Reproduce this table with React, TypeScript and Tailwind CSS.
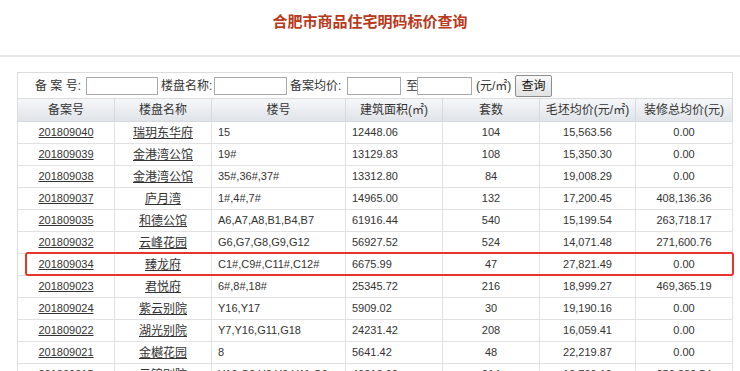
import React from "react";

const rows: string[][] = [
  ["201809040", "瑞玥东华府", "15", "12448.06", "104", "15,563.56", "0.00"],
  ["201809039", "金港湾公馆", "19#", "13129.83", "108", "15,350.30", "0.00"],
  ["201809038", "金港湾公馆", "35#,36#,37#", "13312.80", "84", "19,008.29", "0.00"],
  ["201809037", "庐月湾", "1#,4#,7#", "14965.00", "132", "17,200.45", "408,136.36"],
  ["201809035", "和德公馆", "A6,A7,A8,B1,B4,B7", "61916.44", "540", "15,199.54", "263,718.17"],
  ["201809032", "云峰花园", "G6,G7,G8,G9,G12", "56927.52", "524", "14,071.48", "271,600.76"],
  ["201809034", "臻龙府", "C1#,C9#,C11#,C12#", "6675.99", "47", "27,821.49", "0.00"],
  ["201809023", "君悦府", "6#,8#,18#", "25345.72", "216", "18,999.27", "469,365.19"],
  ["201809024", "紫云别院", "Y16,Y17", "5909.02", "30", "19,190.16", "0.00"],
  ["201809022", "湖光别院", "Y7,Y16,G11,G18", "24231.42", "208", "16,059.41", "0.00"],
  ["201809021", "金樾花园", "8", "5641.42", "48", "22,219.87", "0.00"],
  ["201809015", "云锦别院", "Y10,G2,Y8,Y9,Y11,G9", "40812.92", "214", "12,799.19", "250,882.54"],
];

const headers = ["备案号", "楼盘名称", "楼号", "建筑面积(㎡)", "套数", "毛坯均价(元/㎡)", "装修总均价(元)"];

const grid = "grid grid-cols-[97px_97px_134px_97px_97px_96px_97px]";

export default function App() {
  return (
    <div
      className="w-[740px] h-[371px] overflow-hidden bg-white text-[#333]"
      style={{ fontFamily: '"Liberation Sans", "Noto Sans CJK SC", sans-serif' }}
    >
      <div className="h-[55px] pt-[12px] text-center text-[15px] font-bold leading-[20px] text-[#b8391c]">
        合肥市商品住宅明码标价查询
      </div>
      <div className="h-[2px] bg-[#e8e8e8]" />
      <div className="relative mt-[15px] ml-[17px] w-[716px] border-l border-t border-[#dcdcdc]">
        <div className="flex h-[26px] items-center border-r border-b border-[#dcdcdc] text-[12px]">
          <span className="w-[68px] pl-[17px] whitespace-nowrap">备 案 号:</span>
          <input className="h-[18px] w-[72px] border border-[#a8a8a8] bg-white outline-none" />
          <span className="w-[56px] pl-[3px] whitespace-nowrap">楼盘名称:</span>
          <input className="h-[18px] w-[73px] border border-[#a8a8a8] bg-white outline-none" />
          <span className="w-[60px] pl-[3px] whitespace-nowrap">备案均价:</span>
          <input className="h-[18px] w-[54px] border border-[#a8a8a8] bg-white outline-none" />
          <span className="w-[16px] pl-[5px] whitespace-nowrap">至</span>
          <input className="h-[18px] w-[55px] border border-[#a8a8a8] bg-white outline-none" />
          <span className="w-[43px] pl-[4px] whitespace-nowrap">(元/㎡)</span>
          <button className="h-[22px] w-[37px] rounded-[2px] border border-[#8c8c8c] bg-gradient-to-b from-[#f8f8f8] to-[#e2e2e2] text-[12px] leading-[20px] text-[#111]">
            查询
          </button>
        </div>
        <div className={`${grid} h-[23px] bg-gradient-to-b from-[#f6f7f9] to-[#dfe3e8] text-[12px]`}>
          {headers.map((h) => (
            <div key={h} className="flex items-center justify-center border-r border-b border-[#d6d9de] whitespace-nowrap">
              {h}
            </div>
          ))}
        </div>
        {rows.map((r) => (
          <div key={r[0] + r[2]} className={`${grid} h-[22px]`}>
            <div className="flex items-center justify-center border-r border-b border-[#e2e2e2] text-[11px]">
              <span className="underline">{r[0]}</span>
            </div>
            <div className="flex items-center justify-center border-r border-b border-[#e2e2e2] text-[12px]">
              <span className="underline">{r[1]}</span>
            </div>
            <div className="flex items-center pl-[6px] border-r border-b border-[#e2e2e2] text-[11px] whitespace-nowrap">
              {r[2]}
            </div>
            <div className="flex items-center pl-[6px] border-r border-b border-[#e2e2e2] text-[11px]">
              {r[3]}
            </div>
            <div className="flex items-center justify-center border-r border-b border-[#e2e2e2] text-[11px]">
              {r[4]}
            </div>
            <div className="flex items-center justify-center border-r border-b border-[#e2e2e2] text-[11px]">
              {r[5]}
            </div>
            <div className="flex items-center justify-center border-r border-b border-[#e2e2e2] text-[11px]">
              {r[6]}
            </div>
          </div>
        ))}
        <div className="pointer-events-none absolute left-[7px] top-[179px] h-[24px] w-[709px] rounded-[3px] border-2 border-[#e8352b]" />
      </div>
    </div>
  );
}
